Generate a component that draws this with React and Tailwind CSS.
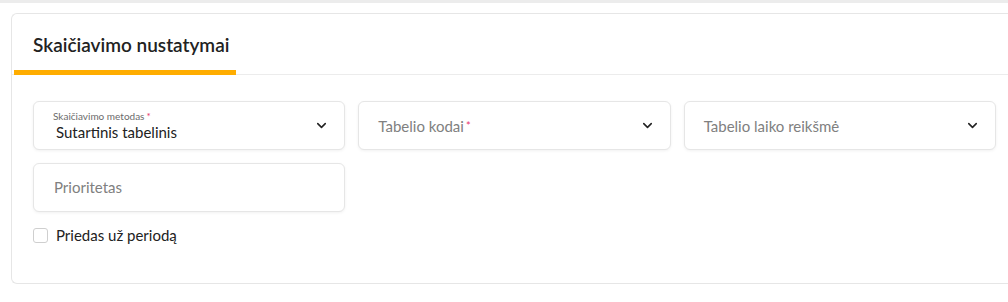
import { ChevronDown } from 'lucide-react'

function SelectField({ label, value, placeholder, required }) {
  return (
    <div className="relative flex h-[49px] items-center rounded-md border border-[#e6e6e6] bg-white pl-[19px] pr-[15px] shadow-[0_1px_3px_rgba(0,0,0,0.06)]">
      <div className="flex-1">
        {label && (
          <div className="mb-[1px] text-[10px] leading-[12px] text-[#6b6b6b]">
            {label}
            {required && <span className="ml-[2px] text-[#e8336b]">*</span>}
          </div>
        )}
        {value ? (
          <div className="ml-[3px] text-[15px] leading-[18px] text-[#222]">{value}</div>
        ) : (
          <div className="text-[15px] leading-[18px] text-[#808080]">
            {placeholder}
            {required && <span className="ml-[2px] align-top text-[11px] text-[#e8336b]">*</span>}
          </div>
        )}
      </div>
      <ChevronDown size={15} strokeWidth={2.5} className="text-[#222]" />
    </div>
  )
}

export default function App() {
  return (
    <div className="h-[302px] w-[1008px] bg-white font-['Lato',sans-serif]">
      <div className="h-[3px] bg-[#ececec]" />
      <div className="ml-[11px] mt-[10px] h-[271px] rounded-l-md border border-r-0 border-[#e6e6e6]">
        {/* Header */}
        <div className="flex h-[61px] border-b border-[#ececec]">
          <div className="relative ml-[2px] flex w-[222px] items-center pl-[19px] pt-[3px]">
            <h2 className="whitespace-nowrap text-[19px] font-semibold text-[#222]">Skaičiavimo nustatymai</h2>
            <div className="absolute bottom-[-1px] left-0 right-0 h-[5px] bg-[#ffad00]" />
          </div>
        </div>

        {/* Body */}
        <div className="px-[21px] pt-[26px]">
          <div className="grid w-[963px] grid-cols-3 gap-x-[13px] gap-y-[13px]">
            <SelectField label="Skaičiavimo metodas" value="Sutartinis tabelinis" required />
            <SelectField placeholder="Tabelio kodai" required />
            <SelectField placeholder="Tabelio laiko reikšmė" />
            <div className="flex h-[49px] items-center rounded-md border border-[#e6e6e6] bg-white pl-[20px] shadow-[0_1px_3px_rgba(0,0,0,0.06)]">
              <span className="text-[15px] text-[#808080]">Prioritetas</span>
            </div>
          </div>
          <label className="mt-[12px] flex items-center gap-[8px]">
            <span className="h-[15px] w-[15px] rounded-[3px] border border-[#cfcfcf] bg-white" />
            <span className="text-[15px] text-[#222]">Priedas už periodą</span>
          </label>
        </div>
      </div>
    </div>
  )
}
